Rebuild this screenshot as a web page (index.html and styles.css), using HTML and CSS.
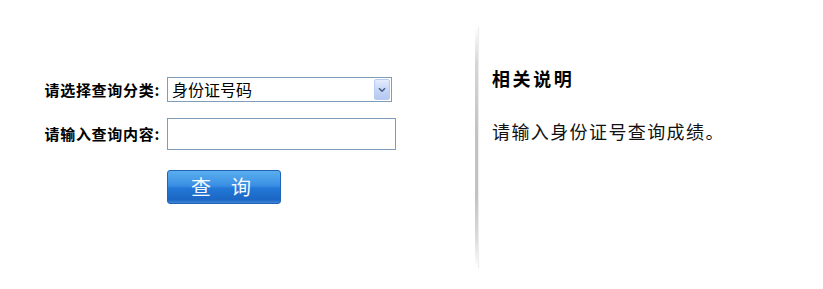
FILE: index.html
```html
<!DOCTYPE html>
<html lang="zh-CN">
<head>
<meta charset="utf-8">
<title>成绩查询</title>
<link rel="stylesheet" href="styles.css">
</head>
<body>
<div class="page">
  <div class="left">
    <form class="form">
      <label class="label" for="qtype">请选择查询分类:</label>
      <div class="select-wrap">
        <select id="qtype" class="select">
          <option>身份证号码</option>
        </select>
        <span class="arrow"><svg width="8" height="6" viewBox="0 0 8 6"><path d="M1 1.2 L4 4.2 L7 1.2" fill="none" stroke="#4a5f86" stroke-width="1.6"/></svg></span>
      </div>
      <label class="label" for="qval">请输入查询内容:</label>
      <input id="qval" class="input" type="text">
      <span></span>
      <button type="button" class="btn">查　询</button>
    </form>
  </div>
  <div class="divider"></div>
  <div class="right">
    <h3 class="title">相关说明</h3>
    <p class="desc">请输入身份证号查询成绩。</p>
  </div>
</div>
</body>
</html>
```

FILE: styles.css
```css
html, body {
  margin: 0;
  padding: 0;
  background: #ffffff;
}
body {
  font-family: "Noto Sans CJK SC", "Noto Sans", sans-serif;
  color: #000;
}
.page {
  display: flex;
  padding-top: 27px;
}
.left {
  width: 475px;
  flex: none;
  padding-top: 50px;
}
.form {
  display: grid;
  grid-template-columns: 160px auto;
  column-gap: 7px;
  align-items: center;
  justify-content: start;
}
.label {
  text-align: right;
  font-size: 15px;
  font-weight: bold;
  letter-spacing: 0.7px;
  line-height: 20px;
  white-space: nowrap;
}
.label:nth-of-type(2) {
  margin-top: 16px;
}
.select-wrap {
  position: relative;
  width: 225px;
  height: 25px;
}
.select {
  appearance: none;
  -webkit-appearance: none;
  box-sizing: border-box;
  width: 225px;
  height: 25px;
  margin: 0;
  border: 1px solid #7f9db9;
  border-radius: 0;
  background: #fff;
  padding: 0 0 0 4px;
  font-family: "Noto Sans CJK SC", sans-serif;
  font-size: 16px;
  line-height: 23px;
  color: #000;
}
.arrow {
  position: absolute;
  top: 2px;
  right: 2px;
  width: 14px;
  height: 19px;
  border: 1px solid #b9cbf1;
  border-radius: 2px;
  background: linear-gradient(to bottom, #e3ebfd, #c3d3f5 60%, #b6c8f2);
  display: flex;
  align-items: center;
  justify-content: center;
  pointer-events: none;
}
.input {
  box-sizing: border-box;
  width: 229px;
  height: 32px;
  margin: 16px 0 0 0;
  border: 1px solid #7f9db9;
  border-radius: 0;
  padding: 0 4px;
  font-size: 14px;
}
.btn {
  grid-column: 2;
  margin-top: 20px;
  box-sizing: border-box;
  width: 114px;
  height: 34px;
  border: 1px solid #2163b5;
  border-radius: 3px;
  background: linear-gradient(to bottom, #5aaef0 0%, #3a8fe3 45%, #2277d6 55%, #1c66c4 90%, #3d86d6 100%);
  color: #f4f9ff;
  font-family: "Noto Sans CJK SC", sans-serif;
  font-size: 20px;
  line-height: 30px;
  padding: 0 6px 0 0;
  cursor: pointer;
}
.divider {
  flex: none;
  width: 3px;
  height: 241px;
  background: linear-gradient(to bottom, rgba(200,200,200,0) 0%, #d6d6d6 15%, #c2c2c2 45%, #c2c2c2 70%, #dcdcdc 88%, rgba(220,220,220,0) 100%);
  box-shadow: 1px 0 1px rgba(230,230,230,0.8);
}
.right {
  padding-left: 14px;
  padding-top: 39px;
}
.title {
  margin: 0;
  font-size: 18px;
  font-weight: bold;
  letter-spacing: 2.6px;
  line-height: 24px;
}
.desc {
  margin: 29px 0 0 0;
  font-size: 18px;
  letter-spacing: 1.4px;
  line-height: 24px;
  color: #111;
}
```
